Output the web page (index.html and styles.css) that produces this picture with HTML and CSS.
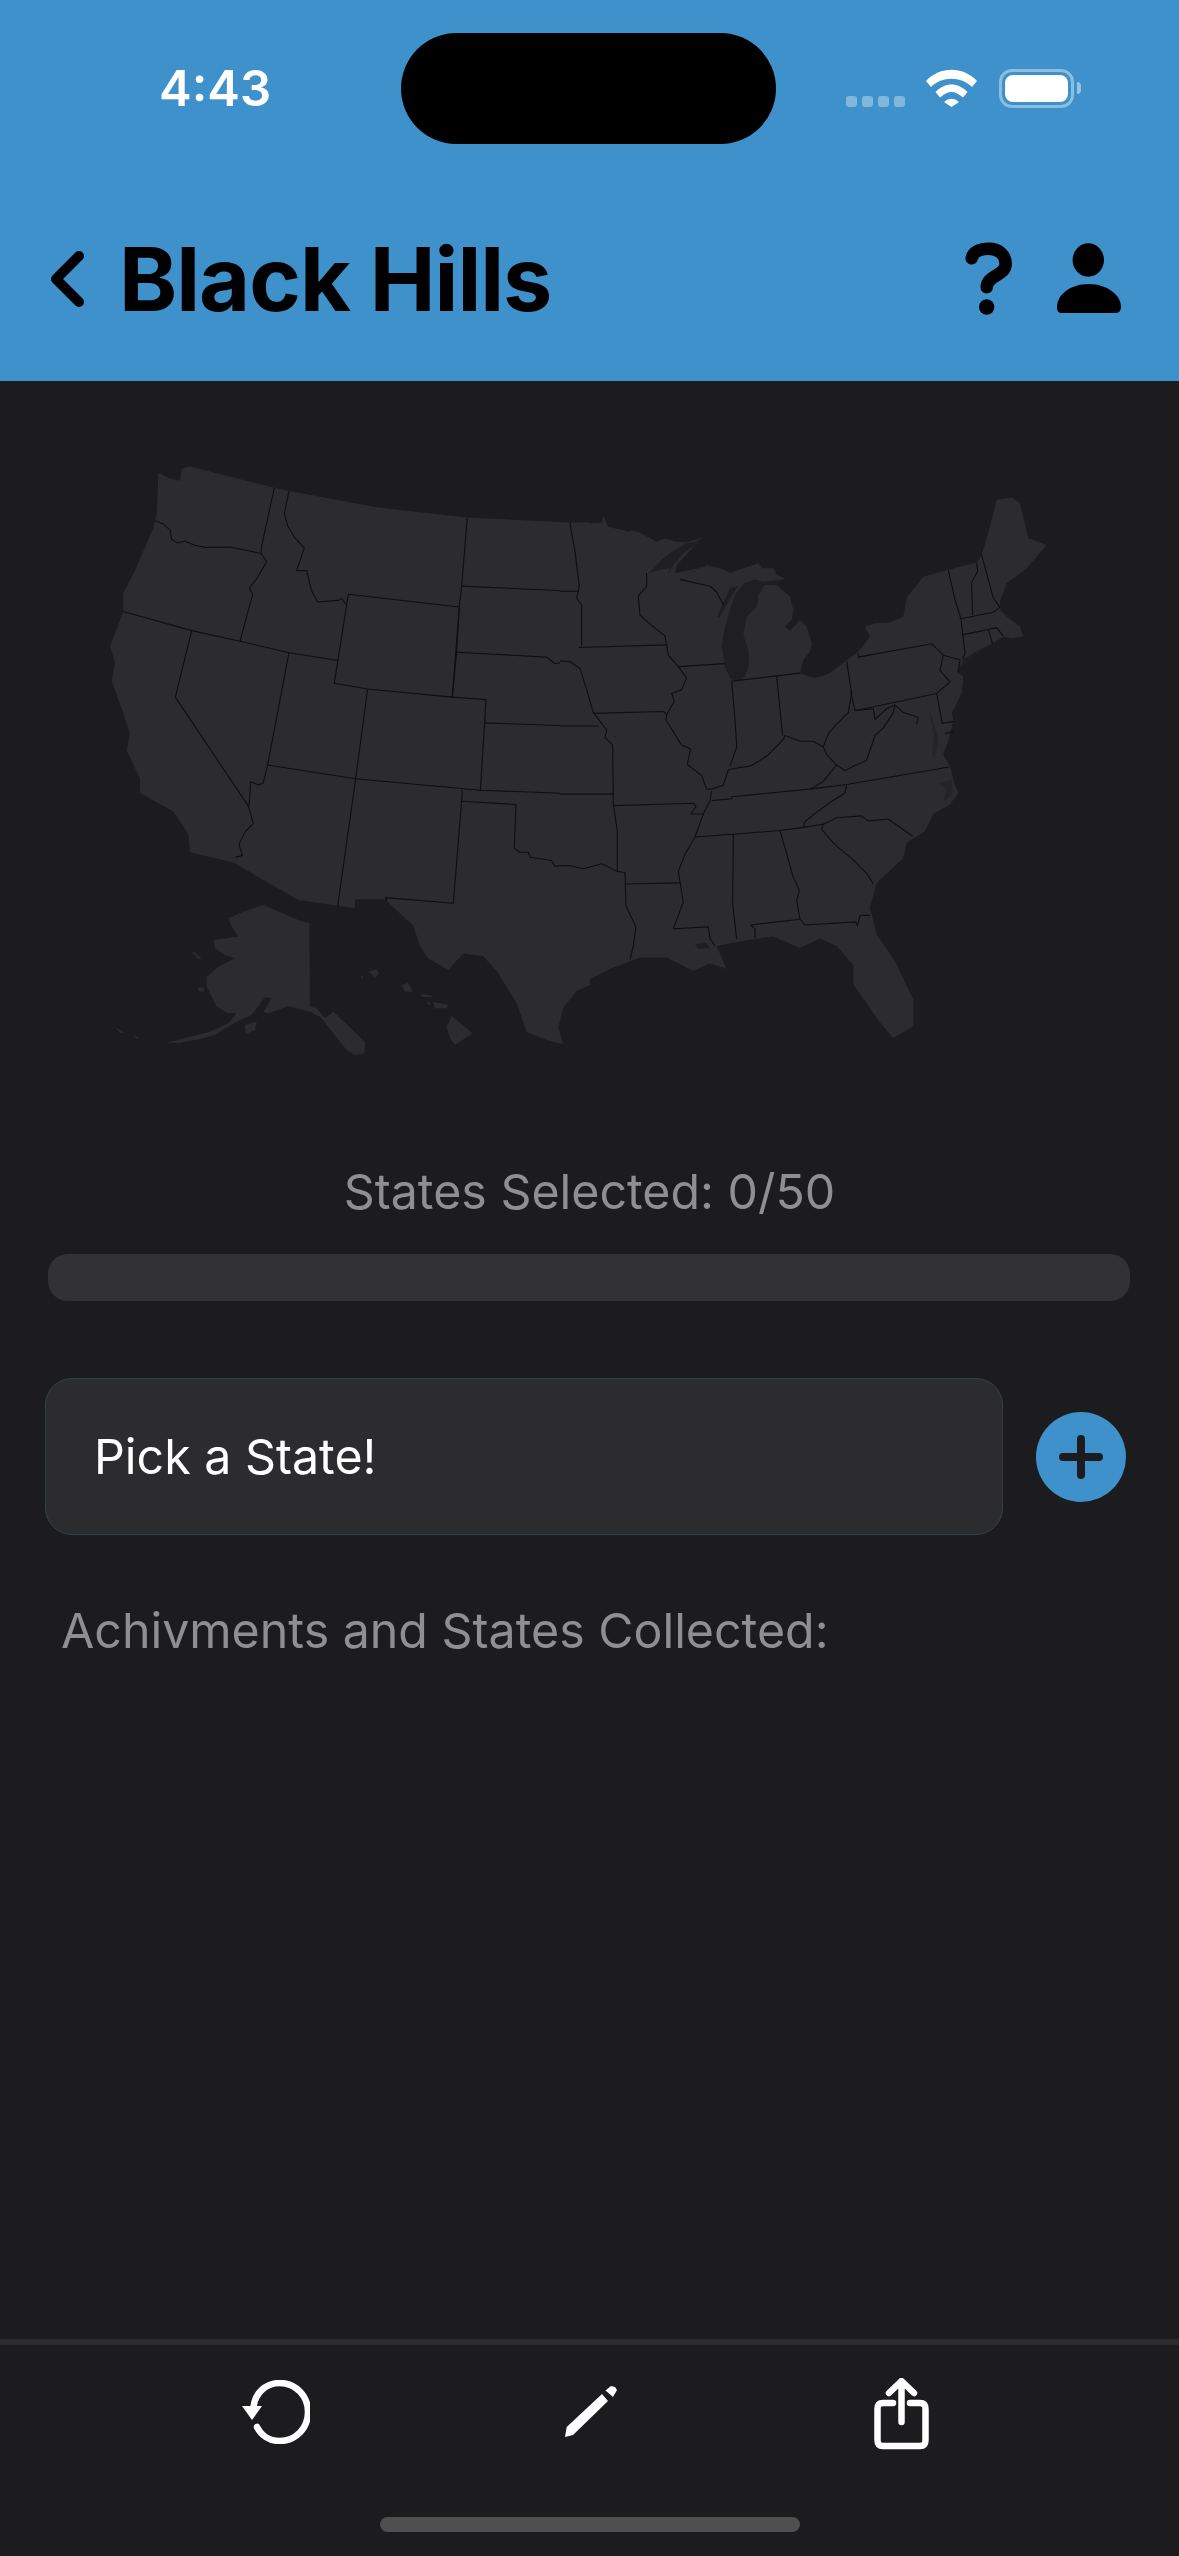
FILE: index.html
```html
<!DOCTYPE html>
<html lang="en">

<head>
  <meta charset="UTF-8">
  <meta name="viewport" content="width=device-width, initial-scale=1.0">
  <title>Black Hills</title>
  <link rel="stylesheet" href="styles.css">
</head>

<body>
  <div class="page">
    <header class="header">
      <div class="statusbar">
        <span class="time">4:43</span>
        <div class="island"></div>
        <div class="status-icons">
          <div class="signal"><i></i><i></i><i></i><i></i></div>
          <svg class="wifi" viewBox="0 0 51 38" width="51" height="38">
            <path d="M0 12C14 -3 37 -3 51 12L46 18C35 7 16 7 5 18Z" />
            <path d="M9.500 23C19 13 32 13 41.500 23L37 28.500C29 21 22 21 14 28.500Z" />
            <path d="M18 33C23 28.500 28 28.500 33 33L25.500 38Z" />
          </svg>
          <div class="battery"><div class="battery-level"></div></div>
          <div class="battery-cap"></div>
        </div>
      </div>
      <nav class="navbar">
        <svg class="back" viewBox="0 0 36 56" width="36" height="56">
          <path d="M30 5L7 28L30 51" />
        </svg>
        <h1 class="title">Black Hills</h1>
        <svg class="help" viewBox="0 0 50 74" width="50" height="74">
          <path class="help-hook" d="M6.700 16.300C8 10 15 6.700 24 6.700C34 6.700 40.700 13 40.700 22C40.700 34 21.700 33 21.700 45.300" />
          <circle cx="21.700" cy="65" r="7.700" />
        </svg>
        <svg class="person" viewBox="0 0 68 71" width="68" height="71">
          <ellipse cx="33.300" cy="17" rx="15.700" ry="16.700" />
          <path d="M2 64C2 52 15 41 33.500 41C52 41 66 52 66 64C66 67 64 70 61 70H6C3 70 2 67 2 64Z" />
        </svg>
      </nav>
    </header>

    <svg class="map" viewBox="0 381 1179 760" width="1179" height="760">
      <!-- traced in pieces, each group has its own scale. they overlap so the seams don't show -->
      <g transform="translate(90 440) scale(.3333 .4082)">
        <path class="land" d="M205,80 L240,95 L270,100 L275,70 L300,65 L553,117 L597,125 L860,165 L1132,190 L1440,202 L1500,202 L1500,1335 L1460,1350 L1420,1390 L1405,1440 L1420,1480 L1370,1470 L1310,1450 L1280,1380 L1220,1300 L1180,1265 L1120,1258 L1075,1298 L1015,1270 L990,1240 L970,1190 L885,1125 L795,1125 L795,1147 L625,1127 L430,1035 L300,1010 L295,965 L250,910 L150,865 L150,830 L110,760 L120,720 L100,670 L65,590 L75,545 L60,505 L100,420 L100,375 L135,320 L190,215 L205,165 L200,190 Z" />
        <path class="lines" d="M195,198 L218,205 L240,220 L245,243 L262,252 L285,248 L315,258 L345,263 L420,262 L513,278" />
        <path class="lines" d="M553,117 L515,260 L513,278 L530,298 L500,340 L478,362 L488,378 L450,493" />
        <path class="lines" d="M597,125 L583,180 L593,210 L615,240 L643,265 L620,320 L650,320 L665,370 L683,397 L745,393 L755,388 L770,405" />
        <path class="lines" d="M775,378 L1108,409 L1087,630 L833,610 L733,596 Z" />
        <path class="lines" d="M1132,190 L1115,358 L1108,409 L1100,520 L1087,630" />
        <path class="lines" d="M1115,358 L1468,371" />
        <path class="lines" d="M1440,202 L1447,250 L1460,310 L1470,360 L1468,375 L1455,390 L1473,405 L1475,505 L1465,510 L1470,545 L1465,555 L1480,585 L1497,635" />
        <path class="lines" d="M1100,520 L1370,532 L1395,548 L1435,542 L1465,555" />
        <path class="lines" d="M1475,505 L1500,505" />
        <path class="lines" d="M1087,630 L1188,636 L1184,693 L1171,860" />
        <path class="lines" d="M1184,693 L1500,702" />
        <path class="lines" d="M833,610 L797,830 L743,1142" />
        <path class="lines" d="M100,420 L305,467 L450,493 L597,521 L745,540" />
        <path class="lines" d="M305,467 L256,630 L475,897" />
        <path class="lines" d="M597,521 L533,796 L520,840 L505,845 L482,837 L478,890 L475,897 L490,940 L465,960 L447,990 L457,1018 L435,1022" />
        <path class="lines" d="M533,796 L797,830 L1171,858 L1500,868" />
        <path class="lines" d="M1117,858 L1115,885 L1090,1135 L887,1121 L890,1130" />
        <path class="lines" d="M1115,885 L1278,893 L1273,1000 L1290,1010 L1315,1010 L1320,1022 L1385,1030 L1395,1045 L1430,1040 L1455,1050 L1500,1045" />
      </g>

      <!-- alaska and hawaii -->
      <g transform="translate(100 890) scale(.3333)">
        <path class="land" d="M385,85 L430,65 L490,45 L530,62 L600,92 L628,100 L630,350 L650,355 L675,385 L700,365 L795,455 L793,490 L765,495 L740,480 L700,430 L660,380 L630,365 L600,358 L565,348 L540,358 L505,370 L490,365 L515,325 L495,322 L470,355 L455,375 L420,390 L385,410 L345,435 L300,447 L240,458 L195,460 L240,448 L330,425 L385,400 L410,370 L385,370 L350,350 L320,290 L320,260 L355,230 L405,205 L375,195 L345,175 L340,150 L400,142 L415,140 L395,110 Z" />
        <path class="land" d="M435,405 L470,395 L465,420 L438,432 Z" />
        <path class="land" d="M278,183 L305,205 L295,208 L278,190 Z" />
        <path class="land" d="M292,292 L312,292 L312,305 L298,303 Z" />
        <path class="land" d="M45,412 L75,428 L60,428 Z" />
        <path class="land" d="M100,435 L120,445 L108,445 Z" />
        <path class="land" d="M1040,410 L1055,378 L1118,430 L1065,465 L1050,445 Z" />
        <path class="land" d="M1000,335 L1045,345 L1040,355 L1005,355 Z" />
        <path class="land" d="M905,285 L925,278 L938,305 L915,305 Z" />
        <path class="land" d="M807,245 L830,238 L838,250 L825,262 Z" />
        <path class="land" d="M780,262 L790,254 L788,265 Z" />
        <path class="land" d="M965,312 L998,318 L995,322 L965,320 Z" />
        <path class="land" d="M980,335 L992,340 L985,345 Z" />
      </g>

      <g transform="translate(560 460) scale(.3333 .3827)">
        <path class="land" d="M0,165 L125,165 L130,145 L145,175 L200,185 L215,190 L215,650 L985,650 L985,425 L1030,410 L1040,360 L1090,305 L1165,287 L1250,268 L1265,248 L1285,190 L1310,104 L1355,98 L1380,113 L1405,204 L1460,222 L1400,283 L1340,322 L1320,370 L1320,392 L1335,405 L1380,435 L1390,462 L1355,466 L1330,462 L1210,527 L1190,553 L1210,566 L1205,610 L1175,662 L1180,680 L1170,720 L1150,770 L1170,800 L1185,850 L1195,870 L1170,900 L1120,925 L1095,970 L1040,1000 L1030,1040 L950,1105 L930,1170 L950,1240 L1005,1310 L1060,1410 L1060,1480 L1000,1510 L960,1470 L880,1370 L880,1320 L830,1270 L780,1250 L720,1275 L640,1245 L560,1255 L470,1270 L500,1330 L450,1315 L400,1335 L320,1300 L240,1300 L150,1330 L60,1370 L0,1425 Z" />
        <path class="lake" d="M1210,520 L1270,490 L1300,480 L1240,515 L1200,550 Z" />
        <path class="bay" d="M1108,650 L1122,690 L1135,730 L1125,780 L1116,770 L1122,720 Z" />
        <path class="bay" d="M1135,845 L1175,835 L1178,875 L1150,895 L1160,860 Z" />
        <path class="lake" d="M405,1265 L440,1262 L450,1275 L415,1278 Z" />
      </g>

      <!-- great lakes, drawn over the hole left in the piece above -->
      <g transform="translate(630 510) scale(.3333)">
        <path class="land" d="M0,60 L30,68 L80,95 L105,85 L135,95 L172,97 L218,82 L140,165 L135,190 L225,170 L255,125 L228,165 L270,175 L300,188 L385,160 L395,175 L430,175 L440,195 L465,205 L440,225 L480,260 L490,300 L485,330 L465,350 L480,362 L510,330 L530,350 L545,400 L540,425 L520,450 L510,490 L555,505 L600,490 L650,450 L685,425 L720,380 L705,350 L735,340 L780,338 L780,600 L0,600 Z" />
        <path class="lake" d="M58,188 L100,145 L125,125 L170,100 L195,95 L218,82 L195,105 L160,130 L130,165 L115,192 L120,175 L85,180 Z" />
        <path class="lake" d="M262,322 L275,290 L300,235 L325,228 L300,265 L285,295 L270,320 Z" />
        <path class="lake" d="M375,208 L340,222 L315,255 L300,300 L285,350 L275,410 L285,470 L300,505 L320,515 L345,500 L358,460 L355,420 L340,375 L350,320 L375,295 L382,290 L385,255 L405,225 L440,225 L465,207 L430,211 L400,215 Z" />
      </g>

      <g transform="translate(560 460) scale(.3333 .3827)">
        <path class="lines" d="M30,165 L45,240 L58,330 L50,360 L65,380 L65,487" />
        <path class="lines" d="M0,343 L55,343" />
        <path class="lines" d="M57,490 L320,483" />
        <path class="lines" d="M260,295 L260,330 L235,355 L240,405 L265,425 L315,460 L325,510 L355,540 L380,570 L365,600 L335,610 L343,630 L320,665" />
        <path class="lines" d="M0,525 L30,527 L60,545 L80,600 L100,660 L140,705 L135,725 L158,745 L160,900 L172,970 L172,1075 L195,1078 L198,1165 L228,1220 L220,1270 L210,1305" />
        <path class="lines" d="M0,695 L115,695" />
        <path class="lines" d="M0,873 L160,873" />
        <path class="lines" d="M0,1060 L30,1060 L70,1068 L125,1055 L172,1075" />
        <path class="lines" d="M100,662 L310,657 L320,665 L318,680 L365,745 L392,755 L382,795 L425,825 L440,860 L455,860 L490,850 L505,810" />
        <path class="lines" d="M160,903 L400,897 L408,905 L392,925 L430,925" />
        <path class="lines" d="M455,865 L450,890 L430,925 L405,985 L375,1030 L355,1075 L370,1155 L340,1225" />
        <path class="lines" d="M197,1108 L360,1105" />
        <path class="lines" d="M340,1225 L445,1220 L450,1250 L465,1270" />
        <path class="lines" d="M455,890 L515,885 L515,880 L750,860 L860,848 L1168,802" />
        <path class="lines" d="M405,985 L520,978 L660,968 L730,960 L790,952" />
        <path class="lines" d="M860,848 L855,870 L810,895 L770,920 L735,945 L730,960" />
        <path class="lines" d="M750,860 L790,840 L830,797" />
        <path class="lines" d="M790,750 L800,770 L830,797 L855,812 L880,800 L920,785 L945,720 L970,700 L1000,660 L1005,640 L1030,660 L1075,672 L1070,690" />
        <path class="lines" d="M505,810 L530,805 L570,800 L600,785 L625,770 L670,730 L675,720 L720,735 L760,735 L790,750 L805,715 L830,690 L865,660 L875,610 L860,525" />
        <path class="lines" d="M355,540 L495,532" />
        <path class="lines" d="M515,578 L720,557" />
        <path class="lines" d="M515,578 L527,700 L530,750 L510,800" />
        <path class="lines" d="M650,565 L668,720" />
        <path class="lines" d="M360,312 L450,330 L470,345 L490,378" />
        <path class="lines" d="M895,505 L895,515 L1115,480 L1150,510 L1140,550 L1170,580 L1130,610 L885,655 L872,605" />
        <path class="lines" d="M1150,510 L1200,522 L1195,555" />
        <path class="lines" d="M885,655 L940,650 L945,678 L980,650 L1005,640" />
        <path class="lines" d="M1130,610 L1147,688 L1182,683" />
        <path class="lines" d="M1155,715 L1180,710" />
        <path class="lines" d="M1165,287 L1185,365 L1203,415 L1215,505 L1208,520" />
        <path class="lines" d="M1250,268 L1253,290 L1235,320 L1238,405" />
        <path class="lines" d="M1265,248 L1300,360 L1320,385" />
        <path class="lines" d="M1203,415 L1300,398 L1320,385" />
        <path class="lines" d="M1207,457 L1285,443 L1310,438 L1330,460" />
        <path class="lines" d="M1285,443 L1298,482" />
        <path class="lines" d="M785,965 L825,1005 L880,1045 L920,1080 L940,1108" />
        <path class="lines" d="M790,952 L785,965" />
        <path class="lines" d="M790,952 L830,935 L905,930 L925,943 L985,938 L1058,983" />
        <path class="lines" d="M520,978 L518,1160 L530,1252" />
        <path class="lines" d="M660,968 L700,1090 L718,1125 L710,1150 L720,1200 L735,1215 L888,1207 L893,1217 L900,1190 L930,1190" />
        <path class="lines" d="M720,1200 L572,1215 L585,1225 L585,1250" />
      </g>
    </svg>

    <main class="content">
      <p class="caption">States Selected: 0/50</p>
      <div class="progress"></div>
      <div class="picker">
        <div class="picker-input">Pick a State!</div>
        <div class="add-button">
          <svg viewBox="0 0 44 44" width="44" height="44">
            <path d="M22 4V40M4 22H40" />
          </svg>
        </div>
      </div>
      <p class="collected">Achivments and States Collected:</p>
    </main>

    <footer class="tabbar">
      <svg class="undo" viewBox="0 0 68 64" width="68" height="64">
        <path class="tab-stroke" d="M11.500 27C13 13 24 3 37.600 3C54 3 66 16 66 32C66 48 54 61 37.600 61C27 61 19 55 15 47" />
        <path d="M0 26H20L10 40Z" />
      </svg>
      <svg class="pencil" viewBox="0 0 53 53" width="53" height="53">
        <path d="M37 9L43 16L8 50L0 52L1.700 42Z" />
        <path d="M40.500 5.500L46 1L50 2L52 5L48 12Z" />
      </svg>
      <svg class="share" viewBox="0 0 56 72" width="56" height="72">
        <path class="tab-stroke" d="M27.500 44V4M15 15L27.500 3L40 15" />
        <path class="tab-stroke" d="M19 25H9C5 25 3.500 27 3.500 31V62C3.500 66 5 68 9 68H46C50 68 51.500 66 51.500 62V31C51.500 27 50 25 46 25H36" />
      </svg>
    </footer>
    <div class="home-row"><div class="home-indicator"></div></div>
  </div>
</body>

</html>
```

FILE: styles.css
```css
* {
  box-sizing: border-box;
}

body {
  margin: 0;
  background: #1c1c1e;
  font-family: Inter, "Liberation Sans", sans-serif;
}

p,
h1 {
  margin: 0;
}

.page {
  width: 1179px;
  height: 2556px;
  display: flex;
  flex-direction: column;
  overflow: hidden;
}

.header {
  height: 381px;
  background: #3e91cb;
}

.statusbar {
  height: 176px;
  display: flex;
  align-items: center;
  padding-left: 159px;
}

.time {
  width: 242px;
  color: #fff;
  font-size: 49px;
  font-weight: 600;
}

.island {
  width: 375px;
  height: 111px;
  border-radius: 56px;
  background: #000;
}

.status-icons {
  display: flex;
  align-items: center;
  margin-left: 70px;
}

.signal {
  display: flex;
  align-items: flex-end;
  gap: 5px;
  height: 38px;
  margin-right: 21px;
}

.signal i {
  width: 11px;
  height: 11px;
  border-radius: 3px;
  background: rgba(255, 255, 255, .35);
}

.wifi {
  fill: #fff;
  margin-right: 22px;
}

.battery {
  width: 75px;
  height: 39px;
  padding: 3px;
  border: 3px solid rgba(255, 255, 255, .4);
  border-radius: 13px;
}

.battery-level {
  height: 100%;
  border-radius: 8px;
  background: #fff;
}

.battery-cap {
  width: 4px;
  height: 12px;
  margin-left: 3px;
  border-radius: 0 6px 6px 0;
  background: rgba(255, 255, 255, .45);
}

.navbar {
  height: 205px;
  display: flex;
  align-items: center;
  padding-left: 49px;
  color: #000;
}

.back {
  fill: none;
  stroke: #000;
  stroke-width: 10;
  stroke-linecap: round;
  stroke-linejoin: round;
}

.title {
  width: 846px;
  margin-left: 34px;
  font-size: 88px;
  font-weight: 700;
  letter-spacing: -1px;
}

.help {
  fill: #000;
}

.help-hook {
  fill: none;
  stroke: #000;
  stroke-width: 12.500;
  stroke-linecap: round;
}

.person {
  margin-left: 40px;
  fill: #000;
}

.map {
  display: block;
  flex: none;
}

.land {
  fill: #2c2c2e;
}

.lake {
  fill: #1f1f21;
}

.bay {
  fill: #252527;
}

.lines {
  fill: none;
  stroke: #0f0f10;
  stroke-width: 1.100;
  vector-effect: non-scaling-stroke;
  stroke-linejoin: round;
}

.content {
  padding: 0 49px 0 45px;
}

.caption {
  margin-top: 22px;
  color: #8e8e93;
  font-size: 48.300px;
  line-height: 58px;
  text-align: center;
  padding-left: 4px;
}

.progress {
  height: 47px;
  margin: 33px 0 0 3px;
  border-radius: 20px;
  background: #323236;
}

.picker {
  display: flex;
  align-items: center;
  gap: 33px;
  margin-top: 77px;
}

.picker-input {
  width: 958px;
  height: 157px;
  display: flex;
  align-items: center;
  padding-left: 48px;
  border: 1px solid #33404a;
  border-radius: 27px;
  background: #2c2c2e;
  color: #fff;
  font-size: 48.300px;
}

.add-button {
  width: 90px;
  height: 90px;
  display: flex;
  align-items: center;
  justify-content: center;
  border-radius: 50%;
  background: #3e91cb;
}

.add-button svg {
  fill: none;
  stroke: #1c1c1e;
  stroke-width: 8;
  stroke-linecap: round;
}

.collected {
  margin: 67px 0 0 16px;
  color: #8e8e93;
  font-size: 48.300px;
  line-height: 58px;
}

.tabbar {
  margin-top: auto;
  height: 178px;
  display: flex;
  align-items: flex-start;
  padding: 35px 0 0 242px;
  border-top: 6px solid #2c2c2e;
  fill: #fff;
}

.tab-stroke {
  fill: none;
  stroke: #fff;
  stroke-width: 6.500;
  stroke-linecap: round;
  stroke-linejoin: round;
}

.pencil {
  margin: 5px 0 0 255px;
}

.share {
  margin: -2px 0 0 256px;
}

.home-row {
  height: 39px;
  display: flex;
  justify-content: center;
}

.home-indicator {
  width: 420px;
  height: 15px;
  border-radius: 8px;
  background: #4f4f4f;
}
```
